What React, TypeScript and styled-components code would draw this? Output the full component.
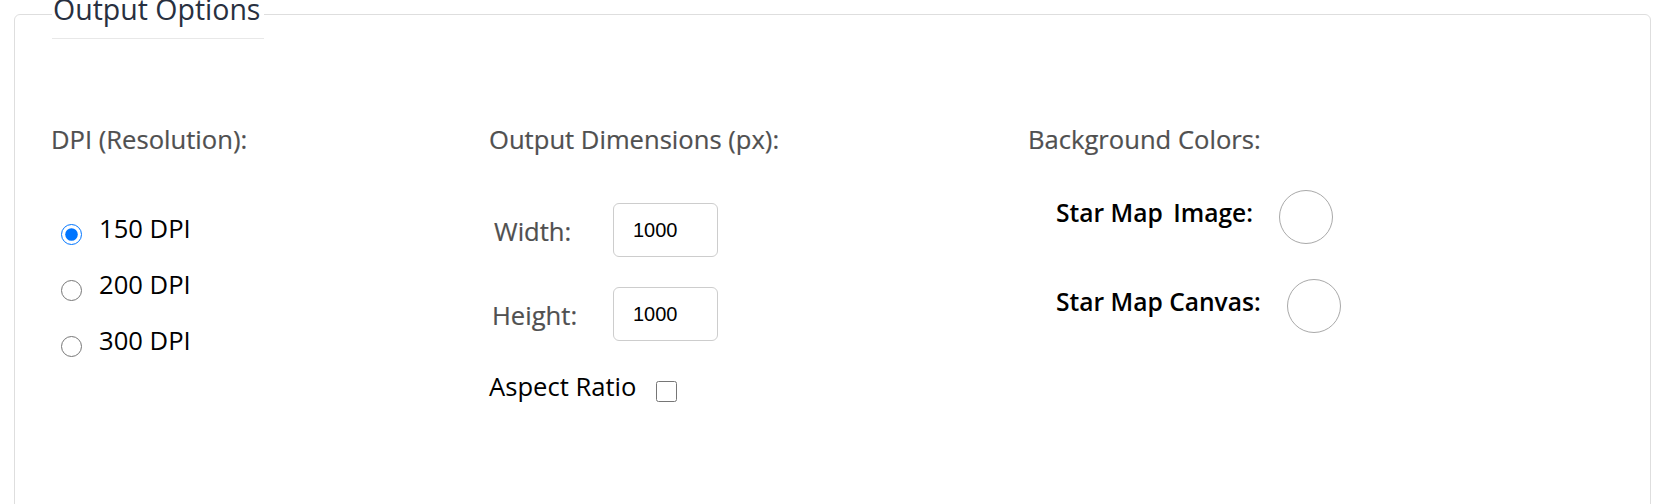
import React, { useState } from "react";
import styled, { createGlobalStyle } from "styled-components";

const GlobalStyle = createGlobalStyle`
  html, body {
    margin: 0;
    padding: 0;
    background: #ffffff;
    font-family: "Open Sans", "Noto Sans", Arial, sans-serif;
  }
  * { box-sizing: border-box; }
`;

const Fieldset = styled.fieldset`
  margin: -10px 16px 0 14px;
  padding: 84px 0 0 36px;
  border: 1px solid #dedede;
  border-radius: 6px;
  min-height: 560px;
  min-width: 0;
`;

const Legend = styled.legend`
  margin-left: 1px;
  padding: 0 4px 10px 1px;
  font-size: 28.5px;
  line-height: 38px;
  color: #283040;
  border-bottom: 1px solid #e8e8e8;
`;

const Columns = styled.div`
  display: grid;
  grid-template-columns: 438px 539px 1fr;
  align-items: start;
`;

const Column = styled.section`
  display: flex;
  flex-direction: column;
`;

const Heading = styled.h3`
  margin: 0;
  font-size: 25.6px;
  line-height: 34px;
  font-weight: 400;
  color: #505050;
  -webkit-text-stroke: 0.2px #505050;
`;

const OptionList = styled.div`
  display: flex;
  flex-direction: column;
  gap: 22px;
  margin-top: 55px;
`;

const OptionRow = styled.label`
  display: flex;
  align-items: center;
  height: 34px;
  font-size: 25.6px;
  line-height: 34px;
  color: #000000;
  cursor: pointer;
`;

const Radio = styled.input.attrs({ type: "radio" })`
  width: 21px;
  height: 21px;
  margin: 10px 17px 0 10px;
  flex: none;
`;

const DimensionList = styled.div`
  display: flex;
  flex-direction: column;
  gap: 30px;
  margin-top: 46px;
`;

const DimensionRow = styled.div`
  display: flex;
  align-items: center;
  height: 54px;
`;

const FieldLabel = styled.label<{ $indent: number }>`
  width: 124px;
  margin-top: 4px;
  padding-left: ${(p) => p.$indent}px;
  font-size: 25.6px;
  line-height: 34px;
  color: #505050;
  -webkit-text-stroke: 0.2px #505050;
`;

const NumberInput = styled.input`
  width: 105px;
  height: 54px;
  padding: 0 0 0 19px;
  border: 1px solid #cdcdcd;
  border-radius: 6px;
  font-family: "Liberation Sans", Arial, sans-serif;
  font-size: 20px;
  color: #000000;
  background: #ffffff;
  outline: none;
`;

const CheckRow = styled.label`
  display: flex;
  align-items: center;
  height: 34px;
  margin-top: 29px;
  font-size: 25.6px;
  line-height: 34px;
  color: #000000;
  cursor: pointer;
`;

const Checkbox = styled.input.attrs({ type: "checkbox" })`
  width: 21px;
  height: 21px;
  margin: 9px 0 0 20px;
  flex: none;
`;

const ColorList = styled.div`
  display: flex;
  flex-direction: column;
  gap: 35px;
  margin-top: 33px;
  padding-left: 28px;
`;

const ColorRow = styled.div`
  display: flex;
  align-items: center;
  height: 54px;
`;

const ColorLabel = styled.span`
  font-size: 24.6px;
  line-height: 33px;
  font-weight: 600;
  color: #000000;
  margin-bottom: 9px;
  white-space: pre;
`;

const Swatch = styled.button<{ $color: string }>`
  width: 54px;
  height: 54px;
  margin-left: 26px;
  padding: 0;
  border: 1px solid #a9a9a9;
  border-radius: 50%;
  background: ${(p) => p.$color};
  cursor: pointer;
`;

const dpiOptions = [150, 200, 300];

export default function App() {
  const [dpi, setDpi] = useState(150);
  const [width, setWidth] = useState("1000");
  const [height, setHeight] = useState("1000");
  const [aspect, setAspect] = useState(false);

  return (
    <>
      <GlobalStyle />
      <Fieldset>
        <Legend>Output Options</Legend>
        <Columns>
          <Column>
            <Heading>DPI (Resolution):</Heading>
            <OptionList>
              {dpiOptions.map((d) => (
                <OptionRow key={d}>
                  <Radio
                    name="dpi"
                    checked={dpi === d}
                    onChange={() => setDpi(d)}
                  />
                  {d} DPI
                </OptionRow>
              ))}
            </OptionList>
          </Column>

          <Column>
            <Heading>Output Dimensions (px):</Heading>
            <DimensionList>
              <DimensionRow>
                <FieldLabel $indent={5} htmlFor="out-width">Width:</FieldLabel>
                <NumberInput
                  id="out-width"
                  value={width}
                  onChange={(e) => setWidth(e.target.value)}
                />
              </DimensionRow>
              <DimensionRow>
                <FieldLabel $indent={3} htmlFor="out-height">Height:</FieldLabel>
                <NumberInput
                  id="out-height"
                  value={height}
                  onChange={(e) => setHeight(e.target.value)}
                />
              </DimensionRow>
            </DimensionList>
            <CheckRow>
              Aspect Ratio
              <Checkbox checked={aspect} onChange={(e) => setAspect(e.target.checked)} />
            </CheckRow>
          </Column>

          <Column>
            <Heading>Background Colors:</Heading>
            <ColorList>
              <ColorRow>
                <ColorLabel>{"Star Map \u2009Image:"}</ColorLabel>
                <Swatch type="button" aria-label="Star Map Image color" $color="#ffffff" />
              </ColorRow>
              <ColorRow>
                <ColorLabel>Star Map Canvas:</ColorLabel>
                <Swatch type="button" aria-label="Star Map Canvas color" $color="#ffffff" />
              </ColorRow>
            </ColorList>
          </Column>
        </Columns>
      </Fieldset>
    </>
  );
}
